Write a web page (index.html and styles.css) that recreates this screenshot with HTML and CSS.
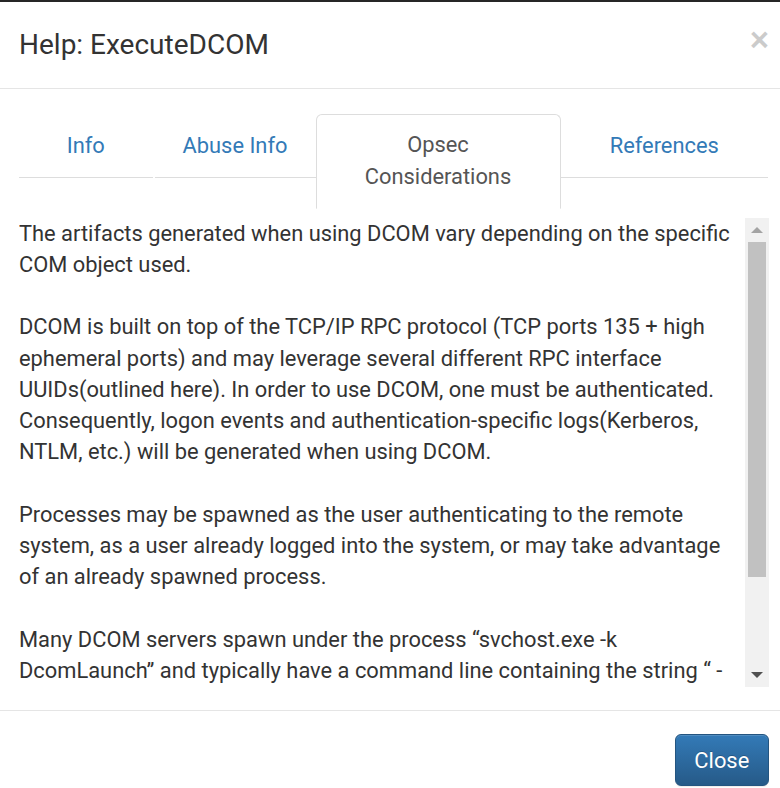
FILE: index.html
```html
<!DOCTYPE html>
<html lang="en">
<head>
<meta charset="utf-8">
<title>Help: ExecuteDCOM</title>
<link rel="stylesheet" href="styles.css">
</head>
<body>
<div class="modal">
  <div class="modal-header">
    <h4 class="modal-title">Help: ExecuteDCOM</h4>
    <button class="close" type="button">×</button>
  </div>
  <div class="modal-body">
    <ul class="tabs">
      <li class="tab"><a href="#">Info</a></li>
      <li class="tab"><a href="#">Abuse Info</a></li>
      <li class="tab active"><a href="#">Opsec<br>Considerations</a></li>
      <li class="tab"><a href="#">References</a></li>
    </ul>
    <div class="pane">
      <div class="pane-text">
        <p>The artifacts generated when using DCOM vary depending on the specific COM object used.</p>
        <p>DCOM is built on top of the TCP/IP RPC protocol (TCP ports 135 + high ephemeral ports) and may leverage several different RPC interface UUIDs(outlined here). In order to use DCOM, one must be authenticated. Consequently, logon events and authentication-specific logs(Kerberos, NTLM, etc.) will be generated when using DCOM.</p>
        <p>Processes may be spawned as the user authenticating to the remote system, as a user already logged into the system, or may take advantage of an already spawned process.</p>
        <p>Many DCOM servers spawn under the process “svchost.exe -k DcomLaunch” and typically have a command line containing the string “ -Embedding” or are executing inside of the DLL hosted process “DllHost.exe /Processid:{&lt;AppId&gt;}” (where AppId is the AppId the COM object is registered to use). Certain COM services are implemented as service executables; consequently, service-related event logs may be generated.</p>
      </div>
      <div class="sbar">
        <div class="sbar-btn"><span class="arrow-up"></span></div>
        <div class="sbar-track"><div class="sbar-thumb"></div></div>
        <div class="sbar-btn"><span class="arrow-down"></span></div>
      </div>
    </div>
  </div>
  <div class="modal-footer">
    <button class="btn-primary" type="button">Close</button>
  </div>
</div>
</body>
</html>
```
FILE: styles.css
```css
html, body {
  margin: 0;
  padding: 0;
  background: #fff;
  overflow: hidden;
}
body {
  width: 780px;
  height: 788px;
  font-family: Roboto, "Noto Sans", "Liberation Sans", sans-serif;
  font-size: 21.875px;
  line-height: 31.25px;
  color: #333;
}
.modal {
  border-top: 2px solid #262626;
  background: #fff;
}
.modal-header {
  display: flex;
  justify-content: space-between;
  align-items: flex-start;
  padding: 23px 11px 23.4px 19px;
  border-bottom: 1.5px solid #e5e5e5;
}
.modal-title {
  margin: 0;
  font-size: 28px;
  font-weight: 400;
  line-height: 40px;
  color: #333;
}
.close {
  margin-top: -2px;
  padding: 0;
  border: 0;
  background: transparent;
  font-family: "Liberation Sans", Arial, sans-serif;
  font-size: 33px;
  font-weight: 700;
  line-height: 33px;
  color: #000;
  opacity: 0.2;
  text-shadow: 0 1px 0 #fff;
}
.modal-body {
  padding: 25px 11px 23.4px 19px;
}
.tabs {
  list-style: none;
  margin: 0 1px 0 0;
  padding: 0;
  display: grid;
  grid-template-columns: 135.5px 161px 245px 1fr;
  align-items: start;
}
.tab a {
  display: block;
  text-align: center;
  text-decoration: none;
  color: #337ab7;
  padding: 15.6px 23px;
  border-bottom: 1.5px solid #ddd;
}
.tab:first-child a {
  margin-right: 2px;
}
.tab.active a {
  color: #555;
  border: 1.5px solid #ddd;
  border-bottom-color: transparent;
  border-radius: 6px 6px 0 0;
  padding-top: 14.1px;
}
.pane {
  display: flex;
  margin-top: 9px;
  height: 469px;
}
.pane-text {
  flex: 1;
  overflow: hidden;
  padding-right: 10px;
}
.pane-text p {
  margin: 0 0 31.25px;
}
.sbar {
  width: 24px;
  display: flex;
  flex-direction: column;
  background: #f1f1f1;
}
.sbar-btn {
  height: 24px;
  display: flex;
  align-items: center;
  justify-content: center;
}
.arrow-up {
  width: 0;
  height: 0;
  border-left: 6px solid transparent;
  border-right: 6px solid transparent;
  border-bottom: 6px solid #a3a3a3;
}
.arrow-down {
  width: 0;
  height: 0;
  border-left: 6px solid transparent;
  border-right: 6px solid transparent;
  border-top: 6px solid #505050;
}
.sbar-track {
  flex: 1;
}
.sbar-thumb {
  margin: 0 3px;
  height: 335px;
  background: #c1c1c1;
}
.modal-footer {
  display: flex;
  justify-content: flex-end;
  padding: 23.4px 11px 23.4px 19px;
  border-top: 1.5px solid #e5e5e5;
}
.btn-primary {
  font-family: Roboto, "Noto Sans", "Liberation Sans", sans-serif;
  font-size: 21.875px;
  line-height: 31.25px;
  padding: 9.4px 18.75px;
  color: #fff;
  border: 1.5px solid #245580;
  border-radius: 6px;
  background-image: linear-gradient(to bottom, #337ab7 0, #265a88 100%);
  text-shadow: 0 -1px 0 rgba(0, 0, 0, 0.2);
  box-shadow: inset 0 1px 0 rgba(255, 255, 255, 0.15), 0 1px 1px rgba(0, 0, 0, 0.075);
}
```
